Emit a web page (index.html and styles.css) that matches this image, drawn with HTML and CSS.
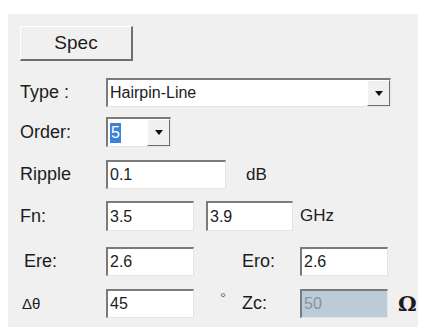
FILE: index.html
```html
<!DOCTYPE html>
<html lang="en">
<head>
    <meta charset="UTF-8">
    <title>Filter Spec</title>
    <link rel="stylesheet" href="styles.css">
</head>
<body>
    <div class="panel">
        <button class="btn">Spec</button>

        <div class="row row-type">
            <span class="label">Type :</span>
            <div class="combo combo-wide">
                <span class="combo-text">Hairpin-Line</span>
                <span class="combo-arrow"></span>
            </div>
        </div>

        <div class="row row-order">
            <span class="label">Order:</span>
            <div class="combo combo-small">
                <span class="combo-text"><span class="selected">5</span></span>
                <span class="combo-arrow"></span>
            </div>
        </div>

        <div class="row row-ripple">
            <span class="label">Ripple</span>
            <div class="field field-long">0.1</div>
            <span class="unit unit-db">dB</span>
        </div>

        <div class="row row-fn">
            <span class="label">Fn:</span>
            <div class="field">3.5</div>
            <div class="field field-second">3.9</div>
            <span class="unit unit-ghz">GHz</span>
        </div>

        <div class="row row-ere">
            <span class="label label-indent">Ere:</span>
            <div class="field">2.6</div>
            <span class="label-right">Ero:</span>
            <div class="field">2.6</div>
        </div>

        <div class="row row-theta">
            <span class="label label-small">Δθ</span>
            <div class="field">45</div>
            <span class="degree">°</span>
            <span class="label-right">Zc:</span>
            <div class="field field-disabled">50</div>
            <span class="omega">Ω</span>
        </div>
    </div>
</body>
</html>
```

FILE: styles.css
```css
* {
    margin: 0;
    padding: 0;
    box-sizing: border-box;
    font-family: 'Liberation Sans', Arial, sans-serif;
}

body {
    background-color: #ffffff;
    color: #1c1c1c;
}

.panel {
    background-color: #f0f0f0;
    margin: 14px 0 0 8px;
    width: 410px;
    height: 313px;
    padding: 12px 0 0 12px;
}

.btn {
    display: block;
    width: 113px;
    height: 35px;
    background-color: #f0f0f0;
    border-top: 1px solid #ffffff;
    border-left: 1px solid #ffffff;
    border-right: 2px solid #6e6e6e;
    border-bottom: 2px solid #6e6e6e;
    font-size: 19px;
    color: #1c1c1c;
}

.row {
    display: flex;
    align-items: center;
    height: 29px;
    font-size: 16px;
}

.row-type { margin-top: 17px; }
.row-order { margin-top: 10px; height: 30px; }
.row-ripple { margin-top: 13px; }
.row-fn { margin-top: 12px; height: 30px; }
.row-ere { margin-top: 16px; }
.row-theta { margin-top: 13px; }

.label {
    width: 86px;
    flex-shrink: 0;
    font-size: 18px;
}

.label-indent {
    padding-left: 4px;
}

.label-small {
    padding-left: 2px;
    font-size: 15px;
}

.label-right {
    width: 58px;
    margin-left: 48px;
    font-size: 18px;
}

.field,
.combo {
    height: 100%;
    background-color: #ffffff;
    border-top: 2px solid #7a7a7a;
    border-left: 2px solid #7a7a7a;
    border-right: 1px solid #e4e4e4;
    border-bottom: 1px solid #e4e4e4;
    display: flex;
    align-items: center;
    padding-left: 2px;
}

.field {
    width: 88px;
}

.field-long {
    width: 120px;
}

.field-second {
    margin-left: 12px;
    width: 87px;
}

.field-disabled {
    background-color: #bccbd8;
    color: #8394a3;
}

.combo {
    justify-content: space-between;
}

.combo-wide {
    width: 285px;
}

.combo-small {
    width: 65px;
}

.combo-text {
    display: flex;
    align-items: center;
}

.selected {
    background-color: #3b83d6;
    color: #ffffff;
    padding: 1px 1px;
}

.combo-arrow {
    width: 23px;
    height: 100%;
    background-color: #f0f0f0;
    border-left: 1px solid #ffffff;
    border-top: 1px solid #ffffff;
    border-right: 1px solid #6e6e6e;
    border-bottom: 1px solid #6e6e6e;
    display: flex;
    align-items: center;
    justify-content: center;
}

.combo-arrow::after {
    content: "";
    border-left: 4px solid transparent;
    border-right: 4px solid transparent;
    border-top: 5px solid #111111;
}

.unit {
    font-size: 17px;
}

.unit-db {
    margin-left: 20px;
}

.unit-ghz {
    margin-left: 7px;
}

.degree {
    width: 48px;
    padding-left: 26px;
    align-self: flex-start;
    color: #666666;
    font-size: 15px;
}

.row-theta .label-right {
    margin-left: 0;
}

.omega {
    margin-left: 10px;
    font-family: 'DejaVu Serif', serif;
    font-weight: bold;
    font-size: 21px;
}
```
